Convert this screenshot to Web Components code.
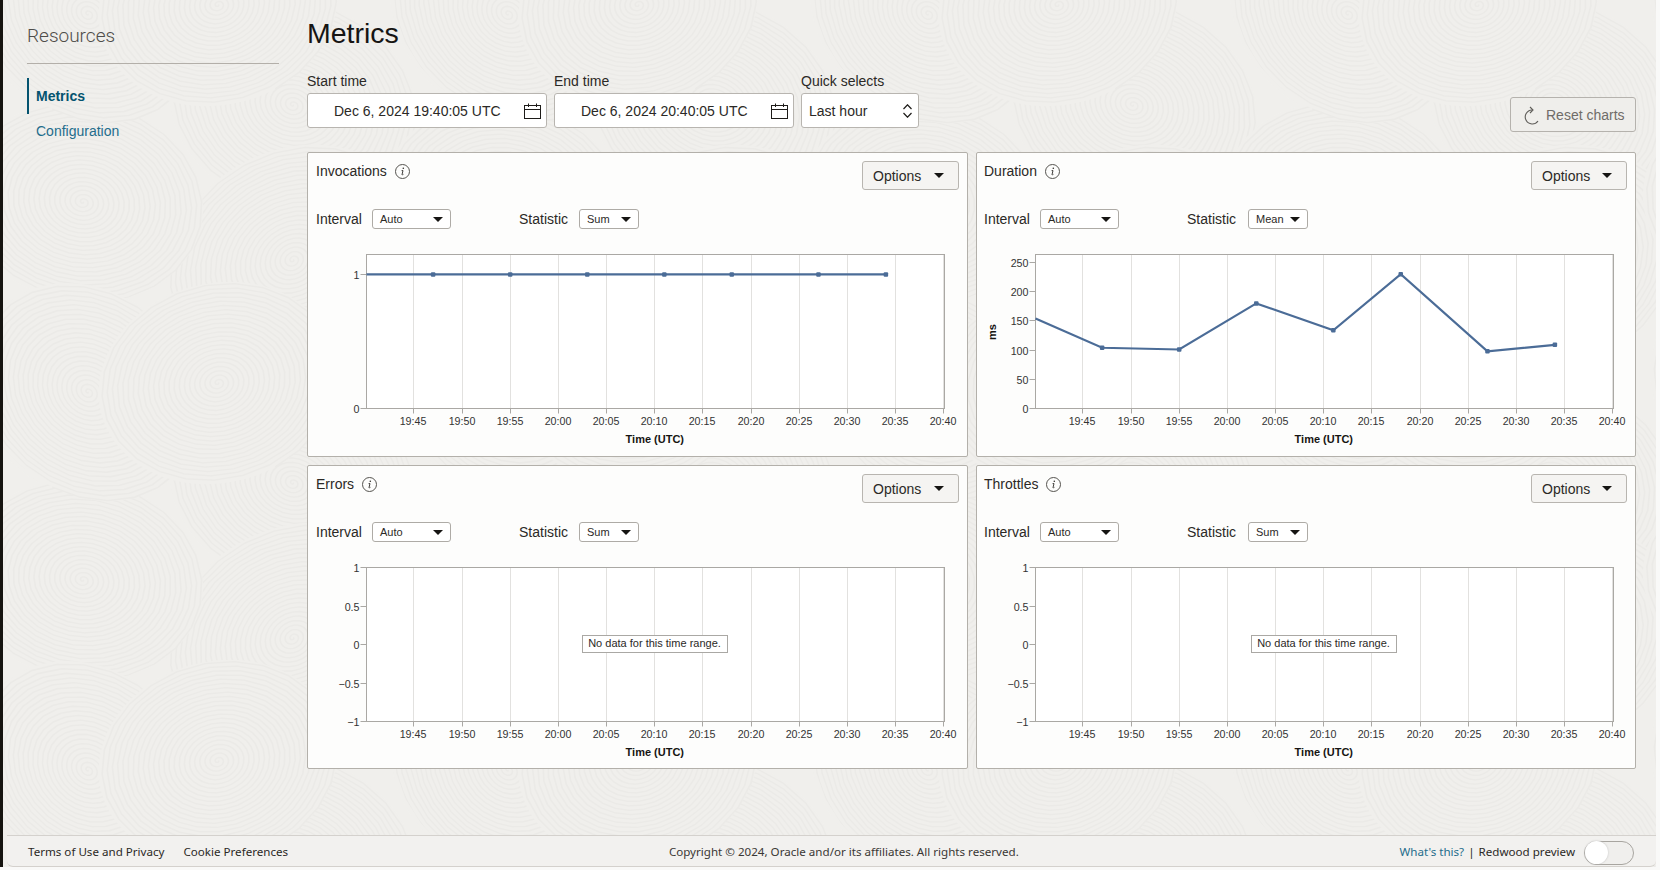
<!DOCTYPE html>
<html>
<head>
<meta charset="utf-8">
<title>Metrics</title>
<style>
  html, body { margin: 0; height: 100%; background: #f9f9f8; overflow: hidden; }
  body { font-family: "Liberation Sans", Arial, sans-serif; color: #161513; }
</style>
</head>
<body>
<app-shell>
  <side-nav slot="side" heading="Resources">
    <nav-item active>Metrics</nav-item>
    <nav-item>Configuration</nav-item>
  </side-nav>

  <page-title>Metrics</page-title>

  <filter-bar>
    <date-field label="Start time" value="Dec 6, 2024 19:40:05 UTC"></date-field>
    <date-field label="End time" value="Dec 6, 2024 20:40:05 UTC"></date-field>
    <quick-select label="Quick selects" value="Last hour"></quick-select>
    <reset-button slot="end">Reset charts</reset-button>
  </filter-bar>

  <chart-grid>
    <metric-panel first heading="Invocations" statistic="Sum">
      <metric-chart domain="0,1.149" yticks="0,1" points="19:40:05=1,19:47=1,19:55=1,20:03=1,20:11=1,20:18=1,20:27=1,20:34=1"></metric-chart>
    </metric-panel>
    <metric-panel heading="Duration" statistic="Mean">
      <metric-chart domain="0,263.7" yticks="0,50,100,150,200,250" ylabel="ms" points="19:40:05=154,19:47=104,19:55=101,20:03=180,20:11=134,20:18=230,20:27=98,20:34=109"></metric-chart>
    </metric-panel>
    <metric-panel first heading="Errors" statistic="Sum">
      <metric-chart domain="-1,1" yticks="-1,-0.5,0,0.5,1"></metric-chart>
    </metric-panel>
    <metric-panel heading="Throttles" statistic="Sum">
      <metric-chart domain="-1,1" yticks="-1,-0.5,0,0.5,1"></metric-chart>
    </metric-panel>
  </chart-grid>

  <page-footer slot="footer"></page-footer>
</app-shell>

<script>
// background swirls, one tile of overlapping spiral discs
function spiralPath(r) {
  let d = "M0 0";
  for (let a = 0.3; a * 0.72 < r; a += 0.25) {
    const q = a * 0.72;
    d += `L${(q * Math.cos(a)).toFixed(1)} ${(q * Math.sin(a)).toFixed(1)}`;
  }
  return d;
}

function swirlTile() {
  const W = 420, H = 378;
  const discs = [
    [290, 105, 110, 20], [290, 260, 115, -30], [80, 14, 105, 40], [215, 5, 105, -15],
    [80, 202, 105, 10], [85, 392, 105, 40], [215, 383, 105, -15]
  ];
  let out = "";
  for (const [cx, cy, r, rot] of discs) {
    const shape = `<path d="${spiralPath(r)}" fill="none" stroke="#ebeae7" stroke-width="1.3"/>`;
    for (const dx of [-W, 0, W]) {
      for (const dy of [-H, 0, H]) {
        const x = cx + dx, y = cy + dy;
        if (x + r * 1.2 < 0 || x - r * 1.2 > W || y + r * 1.2 < 0 || y - r * 1.2 > H) continue;
        out += `<g transform="translate(${x} ${y}) rotate(${rot}) scale(1.15 0.95)"><circle r="${r}" fill="#f0efec"/>${shape}</g>`;
      }
    }
  }
  return `<pattern id="swirl" width="${W}" height="${H}" patternUnits="userSpaceOnUse">${out}</pattern>`;
}

class AppShell extends HTMLElement {
  constructor() {
    super();
    const shadowDom = this.attachShadow({ mode: "open" });
    shadowDom.innerHTML = `
      <style>
        :host { display: flex; flex-direction: column; position: relative; box-sizing: border-box;
                height: 867px; width: 1656px; border-left: 3px solid #15130f; background: #f0efec; }
        .backdrop { position: absolute; inset: 0; width: 100%; height: 100%; }
        .body { position: relative; flex: 1; display: flex; min-height: 0; }
        .side { width: 304px; flex: none; }
        .main { width: 1329px; flex: none; }
        .foot { position: relative; margin-left: 4px; }
      </style>
      <svg class="backdrop" aria-hidden="true"><defs>${swirlTile()}</defs><rect width="100%" height="100%" fill="url(#swirl)"/></svg>
      <div class="body">
        <div class="side"><slot name="side"></slot></div>
        <div class="main"><slot></slot></div>
      </div>
      <div class="foot"><slot name="footer"></slot></div>
    `;
  }
}

class SideNav extends HTMLElement {
  constructor() {
    super();
    const shadowDom = this.attachShadow({ mode: "open" });
    shadowDom.innerHTML = `
      <style>
        :host { display: block; padding: 23px 28px 0 24px; }
        h2 { margin: 0; padding-bottom: 15px; height: 25px; line-height: 25px; font-family: Roboto, "Liberation Sans", sans-serif;
             font-size: 19px; font-weight: 300; color: #4f4d4a; border-bottom: 1px solid #b3afa9; }
        .items { margin-top: 14px; display: flex; flex-direction: column; }
      </style>
      <h2>${this.getAttribute("heading")}</h2>
      <div class="items"><slot></slot></div>
    `;
  }
}

class NavItem extends HTMLElement {
  constructor() {
    super();
    const shadowDom = this.attachShadow({ mode: "open" });
    shadowDom.innerHTML = `
      <style>
        :host { display: block; height: 36px; line-height: 36px; padding-left: 7px; font-size: 14px; margin-top: -1px;
                color: #1f6d8c; border-left: 2px solid transparent; }
        :host([active]) { border-left-color: #04536f; color: #04536f; font-weight: 700; margin-top: 0; }
      </style>
      <slot></slot>
    `;
  }
}

class PageTitle extends HTMLElement {
  constructor() {
    super();
    const shadowDom = this.attachShadow({ mode: "open" });
    shadowDom.innerHTML = `
      <style>
        :host { display: block; height: 71px; box-sizing: border-box; padding-top: 16px;
                font-size: 28.5px; line-height: 34px; color: #161513; }
      </style>
      <slot></slot>
    `;
  }
}

class FilterBar extends HTMLElement {
  constructor() {
    super();
    const shadowDom = this.attachShadow({ mode: "open" });
    shadowDom.innerHTML = `
      <style>
        :host { display: flex; align-items: flex-start; gap: 7px; height: 61px; margin-bottom: 20px; }
        .end { margin-left: auto; align-self: flex-end; }
      </style>
      <slot></slot>
      <div class="end"><slot name="end"></slot></div>
    `;
  }
}

class DateField extends HTMLElement {
  constructor() {
    super();
    const shadowDom = this.attachShadow({ mode: "open" });
    shadowDom.innerHTML = `
      <style>
        :host { display: block; width: 240px; font-size: 14px; }
        label { display: block; height: 20px; line-height: 20px; margin-bottom: 2px; color: #2b2926; }
        .box { box-sizing: border-box; height: 35px; background: #fff; border: 1px solid #b8b5b0; border-radius: 3px;
               display: flex; align-items: center; padding: 0 5px 0 26px; }
        .val { flex: 1; color: #2b2926; }
        svg { display: block; }
      </style>
      <label>${this.getAttribute("label")}</label>
      <div class="box">
        <span class="val">${this.getAttribute("value")}</span>
        <svg width="17" height="16" viewBox="0 0 17 16" fill="none" stroke="#1d1b18" stroke-width="1">
          <rect x="0.5" y="2.5" width="16" height="13"/>
          <path d="M0.5 6.5H16.5M4.5 0.5V4M12.5 0.5V4"/>
        </svg>
      </div>
    `;
  }
}

class QuickSelect extends HTMLElement {
  constructor() {
    super();
    const shadowDom = this.attachShadow({ mode: "open" });
    shadowDom.innerHTML = `
      <style>
        :host { display: block; width: 118px; font-size: 14px; }
        label { display: block; height: 20px; line-height: 20px; margin-bottom: 2px; color: #2b2926; }
        .box { box-sizing: border-box; height: 35px; background: #fff; border: 1px solid #b8b5b0; border-radius: 3px;
               display: flex; align-items: center; padding: 0 7px 0 7px; }
        .val { flex: 1; color: #2b2926; }
        svg { display: block; margin-right: -1px; }
      </style>
      <label>${this.getAttribute("label")}</label>
      <div class="box">
        <span class="val">${this.getAttribute("value")}</span>
        <svg width="9" height="14" viewBox="0 0 9 14" fill="none" stroke="#1d1b18" stroke-width="1.2">
          <path d="M0.5 5L4.5 0.8L8.5 5M0.5 9L4.5 13.2L8.5 9"/>
        </svg>
      </div>
    `;
  }
}

class ResetButton extends HTMLElement {
  constructor() {
    super();
    const shadowDom = this.attachShadow({ mode: "open" });
    shadowDom.innerHTML = `
      <style>
        :host { display: flex; box-sizing: border-box; width: 126px; height: 35px; align-items: center; padding-left: 13px;
                border: 1px solid #b5b2ad; border-radius: 3px; font-size: 14px; color: #6f6c68; background: #efeeeb; }
        svg { display: block; margin-right: 6px; position: relative; top: 1px; }
      </style>
      <svg width="16" height="19" viewBox="0 0 16 19" fill="none" stroke="#5e5c58" stroke-width="1.1">
        <path d="M8 4A7 7 0 1 0 14 15"/>
        <path d="M6 1L9 4L6 7"/>
      </svg>
      <span><slot></slot></span>
    `;
  }
}

class ChartGrid extends HTMLElement {
  constructor() {
    super();
    const shadowDom = this.attachShadow({ mode: "open" });
    shadowDom.innerHTML = `
      <style>
        :host { display: grid; grid-template-columns: 661px 660px; grid-template-rows: 305px 304px; column-gap: 8px; row-gap: 8px; }
      </style>
      <slot></slot>
    `;
  }
}

class MiniSelect extends HTMLElement {
  constructor() {
    super();
    const shadowDom = this.attachShadow({ mode: "open" });
    shadowDom.innerHTML = `
      <style>
        :host { display: flex; box-sizing: border-box; height: 20px; align-items: center; padding: 0 7px 0 7px;
                background: #fff; border: 1px solid #aeaba6; border-radius: 3px; font-size: 11px; color: #2b2926; }
        span { flex: 1; }
        i { display: block; width: 0; height: 0; border-left: 5px solid transparent; border-right: 5px solid transparent; border-top: 5px solid #161513; }
      </style>
      <span><slot></slot></span><i></i>
    `;
  }
}

class MetricPanel extends HTMLElement {
  constructor() {
    super();
    const shadowDom = this.attachShadow({ mode: "open" });
    shadowDom.innerHTML = `
      <style>
        :host { display: block; box-sizing: border-box; background: #fdfdfc; border: 1px solid #b3b0aa; border-radius: 2px;
                position: relative; font-size: 14px; color: #2b2926; --pad: 7px; --opts: 96px; --stat: 61px; }
        :host([first]) { --pad: 8px; --opts: 97px; --stat: 60px; }
        .top { display: flex; justify-content: space-between; height: 47px; box-sizing: border-box; padding: 8px 8px 0 var(--pad); }
        .title { display: flex; align-items: center; gap: 8px; height: 20px; }
        .title svg { display: block; }
        .opts { box-sizing: border-box; width: var(--opts); height: 29px; display: flex; align-items: center; padding-left: 10px;
                background: #f5f4f2; border: 1px solid #b8b5b0; border-radius: 3px; color: #2b2926; }
        .opts span { flex: 1; }
        .opts i { display: block; margin-right: 14px; width: 0; height: 0; border-left: 5px solid transparent; border-right: 5px solid transparent; border-top: 5px solid #161513; }
        .row { display: flex; align-items: center; height: 20px; margin-top: 9px; padding-left: var(--pad); }
        .row span { width: 56px; }
        .row span.stat { width: var(--stat); margin-left: 68px; }
        .row mini-select.interval { width: 79px; }
        .row mini-select.statistic { width: 60px; }
        .plot { margin-top: 12px; }
      </style>
      <div class="top">
        <div class="title">
          <span>${this.getAttribute("heading")}</span>
          <svg width="15" height="15" viewBox="0 0 15 15" fill="none">
            <circle cx="7.5" cy="7.5" r="7" stroke="#55534f" stroke-width="1"/>
            <circle cx="8.3" cy="4.2" r="0.8" fill="#2b2926"/>
            <path d="M6.6 6.6H8L7 10.6Q6.9 11.3 8.4 10.4" stroke="#2b2926" stroke-width="0.9"/>
          </svg>
        </div>
        <div class="opts"><span>Options</span><i></i></div>
      </div>
      <div class="row">
        <span>Interval</span><mini-select class="interval">Auto</mini-select>
        <span class="stat">Statistic</span><mini-select class="statistic">${this.getAttribute("statistic")}</mini-select>
      </div>
      <div class="plot"><slot></slot></div>
    `;
  }
}

class MetricChart extends HTMLElement {
  constructor() {
    super();
    this.attachShadow({ mode: "open" });
  }

  connectedCallback() {
    const L = 58.5, T = 13.5, PW = 578, PH = 154;
    const perMinute = PW / 60;
    const startMin = 19 * 60 + 40 + 5 / 60;
    const parseTime = (s) => {
      const p = s.split(":").map(Number);
      return p[0] * 60 + p[1] + (p[2] || 0) / 60;
    };
    const xOf = (s) => L + (parseTime(s) - startMin) * perMinute;
    const [d0, d1] = this.getAttribute("domain").split(",").map(Number);
    const yOf = (v) => T + PH - ((v - d0) / (d1 - d0)) * PH;
    const snap = (n) => Math.round(n - 0.5) + 0.5;
    const bottom = T + PH;
    let grid = "", xLabels = "";
    for (let i = 0; i < 12; i++) {
      const mins = 19 * 60 + 45 + i * 5;
      const text = `${String(Math.floor(mins / 60))}:${String(mins % 60).padStart(2, "0")}`;
      const x = snap(xOf(text));
      grid += `<path d="M${x} ${T}V${bottom}" stroke="#e2e1df"/><path d="M${x} ${bottom}V${bottom + 5}" stroke="#aaa8a4"/>`;
      xLabels += `<text x="${x - 0.5}" y="184" text-anchor="middle" class="tick">${text}</text>`;
    }
    let yLabels = "";
    for (const tick of this.getAttribute("yticks").split(",")) {
      const y = snap(yOf(Number(tick)));
      const label = tick.replace("-", "\u2212");
      yLabels += `<path d="M${L - 6} ${y}H${L}" stroke="#aaa8a4"/><text x="${L - 7}" y="${y + 4}" text-anchor="end" class="tick">${label}</text>`;
    }
    let series = "";
    const raw = this.getAttribute("points");
    if (raw) {
      const pts = raw.split(",").map((p) => p.split("=")).map(([t, v]) => [xOf(t), yOf(Number(v))]);
      series = `<polyline fill="none" stroke="#4b6c97" stroke-width="2.2" points="${pts.map((p) => p.join(",")).join(" ")}"/>`;
      series += pts.slice(1).map(([x, y]) => `<rect x="${x - 2.25}" y="${y - 2.25}" width="4.5" height="4.5" rx="1" fill="#4b6c97"/>`).join("");
    }
    const nodata = raw ? "" : `
      <rect x="274.5" y="81.5" width="145" height="17" fill="#fff" stroke="#aaa8a4"/>
      <text x="346.5" y="93" text-anchor="middle" class="note">No data for this time range.</text>`;
    const ylabel = this.getAttribute("ylabel");
    const yTitle = ylabel ? `<text transform="translate(19 91) rotate(-90)" text-anchor="middle" class="axis">${ylabel}</text>` : "";
    this.shadowRoot.innerHTML = `
      <style>
        :host { display: block; height: 216px; }
        svg { display: block; overflow: visible; }
        text { font-family: "Liberation Sans", Arial, sans-serif; }
        .tick { font-size: 10.7px; fill: #333; }
        .note { font-size: 11px; fill: #2b2926; }
        .axis { font-size: 11px; font-weight: 700; fill: #161513; }
      </style>
      <svg width="658" height="216" viewBox="0 0 658 216">
        <rect x="${L}" y="${T}" width="${PW}" height="${PH}" fill="#fff"/>
        ${grid}
        <rect x="${L}" y="${T}" width="${PW}" height="${PH}" fill="none" stroke="#aaa8a4"/>
        ${yLabels}
        ${xLabels}
        <text x="${L + PW / 2 - 0.7}" y="202" text-anchor="middle" class="axis">Time (UTC)</text>
        ${yTitle}
        ${series}
        ${nodata}
      </svg>
    `;
  }
}

class PageFooter extends HTMLElement {
  constructor() {
    super();
    const shadowDom = this.attachShadow({ mode: "open" });
    shadowDom.innerHTML = `
      <style>
        :host { display: flex; justify-content: space-between; align-items: center; box-sizing: border-box; height: 32px;
                padding: 1px 22px 0 21px; background: #f2f1ef; border-top: 1px solid #d4d1cd; border-bottom: 1px solid #d4d1cd;
                border-radius: 0 0 6px 6px; font-family: "Noto Sans", sans-serif; font-size: 11.6px; color: #2b2926; }
        .left { display: flex; gap: 19px; }
        .copy { color: #3a3835; }
        .right { display: flex; align-items: center; gap: 4px; }
        .link { color: #1f6d8c; }
        .switch { box-sizing: border-box; width: 50px; height: 24px; margin-left: 5px; position: relative; top: 1px; border: 1px solid #a8a5a0; border-radius: 12px;
                  background: #f0efed; display: flex; align-items: center; }
        .switch i { display: block; width: 23px; height: 23px; border-radius: 50%; background: #fff; box-shadow: 0 0 2px #bbb; }
      </style>
      <div class="left"><span>Terms of Use and Privacy</span><span>Cookie Preferences</span></div>
      <div class="copy">Copyright © 2024, Oracle and/or its affiliates. All rights reserved.</div>
      <div class="right"><span class="link">What's this?</span><span>|</span><span>Redwood preview</span><div class="switch"><i></i></div></div>
    `;
  }
}

customElements.define("app-shell", AppShell);
customElements.define("side-nav", SideNav);
customElements.define("nav-item", NavItem);
customElements.define("page-title", PageTitle);
customElements.define("filter-bar", FilterBar);
customElements.define("date-field", DateField);
customElements.define("quick-select", QuickSelect);
customElements.define("reset-button", ResetButton);
customElements.define("chart-grid", ChartGrid);
customElements.define("mini-select", MiniSelect);
customElements.define("metric-panel", MetricPanel);
customElements.define("metric-chart", MetricChart);
customElements.define("page-footer", PageFooter);
</script>
</body>
</html>
